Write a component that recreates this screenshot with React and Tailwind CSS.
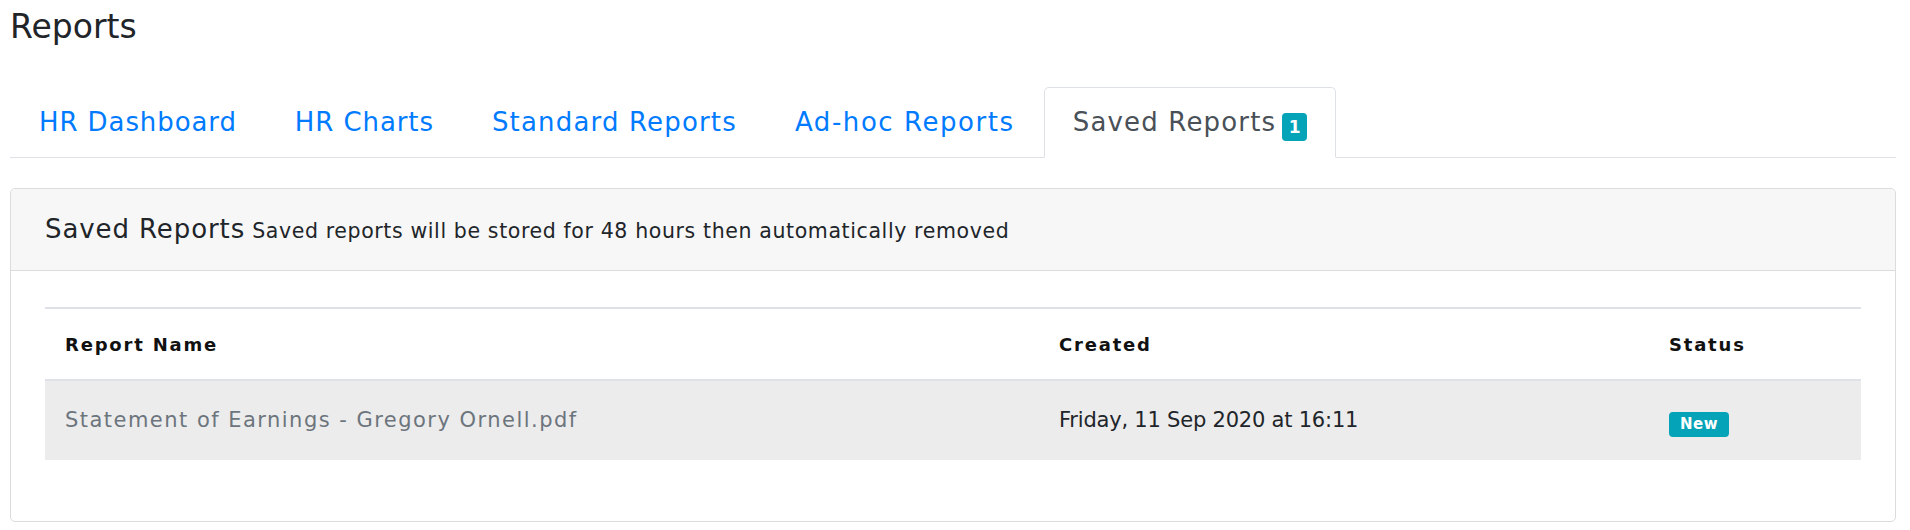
import React from "react";

const tabs = [
    { label: "HR Dashboard", cls: "tracking-[0.035em]" },
    { label: "HR Charts", cls: "tracking-[0.035em]" },
    { label: "Standard Reports", cls: "tracking-[0.045em]" },
    { label: "Ad-hoc Reports", cls: "tracking-[0.06em]" },
];

export default function App() {
    return (
        <div className="min-h-[530px] bg-white pl-[10px] pr-[14px] font-['DejaVu_Sans',sans-serif] text-[#212529]">
            {/* Page title */}
            <h1 className="pt-[6px] text-[33px] leading-[42px] font-normal">Reports</h1>

            {/* Tabs */}
            <div className="mt-[39px] flex border-b border-[#dee2e6]">
                {tabs.map((t) => (
                    <a
                        key={t.label}
                        href="#"
                        className={`-mb-px border border-transparent px-[28px] pt-[16px] pb-[17px] text-[26px] leading-[36px] text-[#007bff] ${t.cls}`}
                    >
                        {t.label}
                    </a>
                ))}
                <a
                    href="#"
                    className="-mb-px flex items-center rounded-t-[5px] border border-[#dee2e6] border-b-white bg-white px-[28px] pt-[16px] pb-[17px] text-[26px] leading-[36px] tracking-[0.045em] text-[#495057]"
                >
                    Saved Reports
                    <span className="ml-[6px] inline-flex h-[28px] w-[25px] translate-y-[5px] items-center justify-center rounded-[4px] bg-[#05a3b8] text-[17px] font-bold tracking-normal text-white">
                        1
                    </span>
                </a>
            </div>

            {/* Card */}
            <div className="mt-[30px] rounded-[5px] border border-[#dcdcdc] bg-white">
                <div className="flex h-[82px] items-center gap-[7px] rounded-t-[5px] border-b border-[#dcdcdc] bg-[#f7f7f7] px-[34px]">
                    <span className="text-[26px] tracking-[0.035em] text-[#212529]">Saved Reports</span>
                    <span className="pt-[3px] text-[20.5px] tracking-[0.03em] text-[#212529]">
                        Saved reports will be stored for 48 hours then automatically removed
                    </span>
                </div>

                <div className="px-[34px] pt-[36px] pb-[61px]">
                    <div className="border-t-2 border-[#dee2e6]">
                        <div className="grid h-[72px] grid-cols-[1014px_610px_1fr] items-center border-b-2 border-[#dee2e6] text-[18px] font-bold tracking-[0.1em] text-[#111]">
                            <div className="pl-[20px]">Report Name</div>
                            <div>Created</div>
                            <div>Status</div>
                        </div>
                        <div className="grid h-[79px] grid-cols-[1014px_610px_1fr] items-center bg-[#ececec] text-[21px]">
                            <div className="pl-[20px] tracking-[0.07em] text-[#6c757d]">Statement of Earnings - Gregory Ornell.pdf</div>
                            <div className="tracking-[-0.01em] text-[#212529]">Friday, 11 Sep 2020 at 16:11</div>
                            <div>
                                <span className="inline-flex h-[25px] translate-y-[2px] items-center rounded-[4px] bg-[#05a3b8] px-[11px] text-[15px] font-bold tracking-[0.03em] text-white">
                                    New
                                </span>
                            </div>
                        </div>
                    </div>
                </div>
            </div>
        </div>
    );
}
